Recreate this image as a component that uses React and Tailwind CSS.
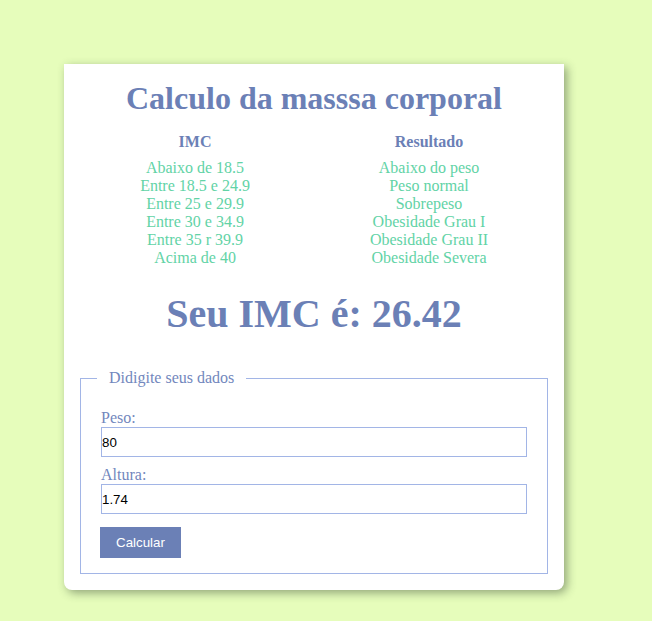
import React, { useState } from 'react';

const faixas = [
  ['Abaixo de 18.5', 'Abaixo do peso'],
  ['Entre 18.5 e 24.9', 'Peso normal'],
  ['Entre 25 e 29.9', 'Sobrepeso'],
  ['Entre 30 e 34.9', 'Obesidade Grau I'],
  ['Entre 35 r 39.9', 'Obesidade Grau II'],
  ['Acima de 40', 'Obesidade Severa'],
];

export default function App() {
  const [peso, setPeso] = useState('80');
  const [altura, setAltura] = useState('1.74');
  const [imc, setImc] = useState('26.42');

  function calcular() {
    const p = parseFloat(peso);
    const a = parseFloat(altura);
    if (p && a) setImc((p / (a * a)).toFixed(2));
  }

  return (
    <div className="min-h-[621px] bg-[#e6fdbb] pt-16 pl-16" style={{ fontFamily: '"Liberation Serif", serif' }}>
      <div className="w-[500px] bg-white rounded-b-lg p-4 shadow-[3px_3px_10px_rgba(40,60,40,0.45)]">
        <h1 className="text-[32px] leading-[37px] font-bold text-center text-[#6b80b6]">
          Calculo da masssa corporal
        </h1>

        {/* tabela de faixas */}
        <div className="grid grid-cols-2 w-[468px] -ml-0.5 mt-4 text-center text-base leading-[18px]">
          <div className="font-bold text-[#6b80b6]">IMC</div>
          <div className="font-bold text-[#6b80b6]">Resultado</div>
          <div className="mt-2 text-[#62d3a6]">
            {faixas.map(f => <div key={f[0]}>{f[0]}</div>)}
          </div>
          <div className="mt-2 text-[#62d3a6]">
            {faixas.map(f => <div key={f[1]}>{f[1]}</div>)}
          </div>
        </div>

        <h2 className="mt-6 text-[40px] leading-[46px] font-bold text-center text-[#6b80b6]">
          Seu IMC é: {imc}
        </h2>

        <fieldset className="mt-8 border border-[#a2b5e6] px-5 pt-[22px] pb-[15px]">
          <legend className="-ml-1 px-3 text-base leading-[18px] text-[#7287bd]">Didigite seus dados</legend>

          <label className="block text-base leading-[18px] text-[#7287bd]">Peso:</label>
          <input
            value={peso}
            onChange={e => setPeso(e.target.value)}
            className="block w-full h-[30px] border border-[#a2b5e6] text-[13.33px] text-black outline-none"
            style={{ fontFamily: '"Liberation Sans", Arial, sans-serif' }}
          />

          <label className="block mt-[9px] text-base leading-[18px] text-[#7287bd]">Altura:</label>
          <input
            value={altura}
            onChange={e => setAltura(e.target.value)}
            className="block w-full h-[30px] border border-[#a2b5e6] text-[13.33px] text-black outline-none"
            style={{ fontFamily: '"Liberation Sans", Arial, sans-serif' }}
          />

          <button
            onClick={calcular}
            className="mt-[13px] -ml-px w-[81px] h-[31px] bg-[#6b80b6] text-white text-[13.33px]"
            style={{ fontFamily: '"Liberation Sans", Arial, sans-serif' }}
          >
            Calcular
          </button>
        </fieldset>
      </div>
    </div>
  );
}
